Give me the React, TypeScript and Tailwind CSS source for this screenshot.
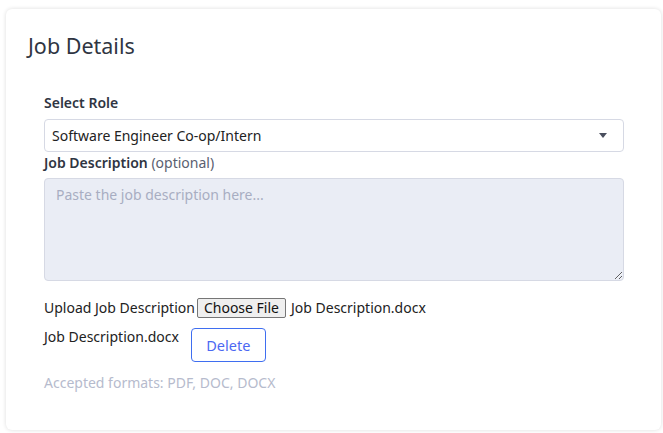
export default function App() {
  const font = { fontFamily: '"Noto Sans", "Segoe UI", sans-serif' };
  return (
    <div className="min-h-[433px] w-[663px] bg-white pt-[9px] pl-[6px]" style={font}>
      <div className="h-[421px] w-[655px] rounded-[6px] bg-white pl-[22px] pr-[21px] pt-[23px] shadow-[0_0_4px_rgba(0,0,0,0.14)]">
        <h2 className="text-[21.5px] leading-[28px] text-[#2f3542]">Job Details</h2>

        <div className="mt-[33px] px-[16px]">
          <label className="block text-[14px] leading-[20px] font-semibold text-[#2f3542]">Select Role</label>
          <div className="mt-[6px] flex h-[33px] items-center justify-between rounded-[4px] border border-[#d6d9e4] bg-white pl-[7px] pr-[16px]">
            <span className="text-[14px] text-[#222]">Software Engineer Co-op/Intern</span>
            <svg width="8" height="5" viewBox="0 0 8 5">
              <path d="M0 0h8L4 5z" fill="#4a4f5e" />
            </svg>
          </div>

          <div className="mt-[1px] text-[14px] leading-[20px] text-[#2f3542]">
            <span className="font-semibold">Job Description</span>{" "}
            <span className="text-[#5a6070]">(optional)</span>
          </div>
          <textarea
            placeholder="Paste the job description here..."
            className="mt-[5px] block h-[103px] w-full resize-y rounded-[4px] border border-[#d6d9e4] bg-[#eaedf5] px-[11px] py-[6px] text-[14px] leading-[20px] placeholder:text-[#a8adc2] outline-none"
          />

          <div className="mt-[17px] flex items-center text-[14px] leading-[20px] text-[#222]">
            <span>Upload Job Description</span>
            <span className="ml-[2px] flex h-[20px] items-center rounded-[2px] border border-[#767676] bg-[#efefef] px-[6px] text-[#111]">
              Choose File
            </span>
            <span className="ml-[5px]">Job Description.docx</span>
          </div>

          <div className="mt-[10px] flex items-start text-[14px] leading-[20px] text-[#222]">
            <span className="mt-[-1px]">Job Description.docx</span>
            <button className="ml-[12px] h-[34px] w-[75px] rounded-[4px] border border-[#3f6ef0] bg-white text-[14.5px] text-[#4c68f2]">
              Delete
            </button>
          </div>

          <p className="mt-[11px] text-[14px] leading-[20px] text-[#b6bbcd]">Accepted formats: PDF, DOC, DOCX</p>
        </div>
      </div>
    </div>
  );
}
